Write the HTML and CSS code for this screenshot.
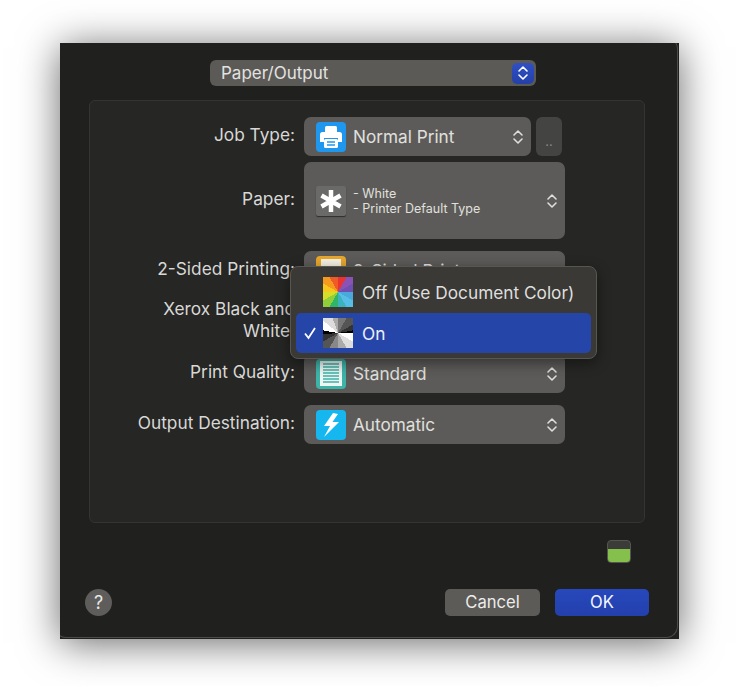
FILE: index.html
```html
<!DOCTYPE html>
<html lang="en">
<head>
<meta charset="utf-8">
<title>Print dialog</title>
<link rel="stylesheet" href="styles.css">
</head>
<body>
<main class="window">
  <div class="preset">
    <span>Paper/Output</span>
    <span class="preset-arrows"><svg width="14" height="18" viewBox="0 0 14 18"><path d="M3 7l4-4 4 4M3 11l4 4 4-4" class="chev chev-white"/></svg></span>
  </div>

  <section class="panel">
    <div class="row row-tight">
      <div class="label">Job Type:</div>
      <div class="control-group">
        <div class="select select-job">
          <svg class="icon" viewBox="0 0 30 30">
            <rect width="30" height="30" rx="4" fill="#1f97ee"/>
            <path d="M9 10V5.500A1.500 1.500 0 0 1 10.500 4h9A1.500 1.500 0 0 1 21 5.500V10z" fill="#fff"/>
            <path d="M6.500 10h17A2.500 2.500 0 0 1 26 12.500V20h-4v-4H8v4H4v-7.500A2.500 2.500 0 0 1 6.500 10z" fill="#fff"/>
            <rect x="8" y="17" width="14" height="9" rx="1.500" fill="#fff"/>
            <path d="M11 20h8M11 23h8" stroke="#1f97ee" stroke-width="1.500"/>
          </svg>
          <span class="select-text">Normal Print</span>
          <svg class="arrows" width="12" height="18" viewBox="0 0 12 18"><path d="M2 7l4-4 4 4M2 11l4 4 4-4" class="chev"/></svg>
        </div>
        <div class="dots">..</div>
      </div>
    </div>

    <div class="row row-paper">
      <div class="label">Paper:</div>
      <div class="select select-paper">
        <svg class="icon icon-paper" viewBox="0 0 30 30">
          <path d="M15 4v22M5.500 9.500l19 11M24.500 9.500l-19 11" stroke="#fff" stroke-width="4.500"/>
        </svg>
        <div class="paper-text">
          <div>- White</div>
          <div>- Printer Default Type</div>
        </div>
        <svg class="arrows" width="12" height="18" viewBox="0 0 12 18"><path d="M2 7l4-4 4 4M2 11l4 4 4-4" class="chev"/></svg>
      </div>
    </div>

    <div class="row">
      <div class="label">2-Sided Printing:</div>
      <div class="select">
        <svg class="icon icon-raised" viewBox="0 0 30 30">
          <rect width="30" height="30" rx="4" fill="#e8a72c"/>
          <rect x="5" y="3" width="20" height="24" fill="#f6f1e2"/>
        </svg>
        <span class="select-text">2-Sided Print</span>
      </div>
    </div>

    <div class="row row-xerox">
      <div class="label">Xerox Black and<br>White:</div>
      <div class="select"></div>
    </div>

    <div class="row">
      <div class="label">Print Quality:</div>
      <div class="select">
        <svg class="icon" viewBox="0 0 30 30">
          <rect width="30" height="30" rx="4" fill="#3eb3a8"/>
          <rect x="4" y="2" width="22" height="25" fill="#eef5f3"/>
          <path d="M7 5h16M7 8h16M7 11h16M7 14h16M7 17h16M7 20h16M7 23h16" stroke="#3eb3a8" stroke-width="1.300"/>
        </svg>
        <span class="select-text">Standard</span>
        <svg class="arrows" width="12" height="18" viewBox="0 0 12 18"><path d="M2 7l4-4 4 4M2 11l4 4 4-4" class="chev"/></svg>
      </div>
    </div>

    <div class="row">
      <div class="label">Output Destination:</div>
      <div class="select">
        <svg class="icon" viewBox="0 0 30 30">
          <rect width="30" height="30" rx="4" fill="#16b6ee"/>
          <path d="M17 3 L8 16 L14 16 L8 27 L23 12 L16.500 12 L22 4z" fill="#fff"/>
        </svg>
        <span class="select-text">Automatic</span>
        <svg class="arrows" width="12" height="18" viewBox="0 0 12 18"><path d="M2 7l4-4 4 4M2 11l4 4 4-4" class="chev"/></svg>
      </div>
    </div>
  </section>

  <div class="status-row">
    <div class="status"></div>
  </div>

  <footer class="footer">
    <div class="help">?</div>
    <div class="actions">
      <div class="btn btn-cancel">Cancel</div>
      <div class="btn btn-ok">OK</div>
    </div>
  </footer>

  <div class="menu">
    <div class="menu-item menu-item-first">
      <span class="check"></span>
      <span class="swatch swatch-color"></span>
      <span>Off (Use Document Color)</span>
    </div>
    <div class="menu-item menu-item-on">
      <span class="check"><svg width="14" height="14" viewBox="0 0 14 14"><path d="M2 7.500l3.500 4.500L12 2" class="tick"/></svg></span>
      <span class="swatch swatch-mono"></span>
      <span>On</span>
    </div>
  </div>
</main>
</body>
</html>
```

FILE: styles.css
```css
* {
  box-sizing: border-box;
}

html,
body {
  margin: 0;
  height: 100%;
  background: #fff;
  overflow: hidden;
}

body {
  padding: 43px 0 0 60px;
  font-family: Inter, "Liberation Sans", sans-serif;
  color: #dcdcda;
}

.window {
  position: relative;
  width: 619px;
  height: 596px;
  padding-top: 17px;
  background: #20201e;
  box-shadow: 0 4px 38px rgba(0, 0, 0, 0.6);
}

.window::after {
  content: "";
  position: absolute;
  inset: -6px 1px 1px -6px;
  border: 1px solid #4c4c4a;
  border-radius: 12px;
  pointer-events: none;
  clip-path: inset(6px 0 0 6px);
  border-left-color: transparent;
  border-top-color: transparent;
}

.preset {
  display: flex;
  align-items: center;
  justify-content: space-between;
  width: 326px;
  height: 26px;
  margin-left: 150px;
  padding: 0 2px 1px 11px;
  border-radius: 6px;
  background: #5b5a57;
  font-size: 17px;
  color: #e2e2e0;
}

.preset-arrows {
  display: flex;
  align-items: center;
  justify-content: center;
  width: 22px;
  height: 21px;
  margin-top: 1px;
  border-radius: 5px;
  background: linear-gradient(#2f50c4, #2440a8);
}

.chev {
  fill: none;
  stroke: #dedede;
  stroke-width: 1.600;
  stroke-linecap: round;
  stroke-linejoin: round;
}

.chev-white {
  stroke: #fff;
}

.panel {
  width: 556px;
  height: 423px;
  margin: 14px 0 0 29px;
  padding-top: 16px;
  border: 1px solid #343432;
  border-radius: 6px;
  background: #262624;
}

.row {
  display: flex;
  align-items: center;
  gap: 9px;
  height: 39px;
  margin-bottom: 12px;
}

.row-tight {
  margin-bottom: 6px;
}

.row-paper {
  height: 77px;
}

.row-xerox {
  height: 40px;
}

.label {
  width: 205px;
  padding-bottom: 4px;
  font-size: 17.300px;
  line-height: 22px;
  text-align: right;
  color: #d8d8d6;
}

.control-group {
  display: flex;
  gap: 5px;
}

.select {
  display: flex;
  align-items: center;
  width: 261px;
  height: 39px;
  padding: 0 7px 0 12px;
  border-radius: 7px;
  background: #5c5b59;
}

.select-job {
  width: 227px;
}

.select-paper {
  height: 77px;
}

.select-text {
  flex: 1;
  padding-left: 7px;
  font-size: 17.200px;
  color: #e0e0de;
  white-space: nowrap;
}

.icon {
  flex: none;
  width: 30px;
  height: 30px;
}

.icon-paper {
  border-radius: 2px;
  background: #6a6a68;
  box-shadow: 0 1px 1px rgba(0, 0, 0, 0.5);
}

.paper-text {
  flex: 1;
  padding-left: 7px;
  font-size: 12.500px;
  line-height: 15px;
  color: #e0e0de;
}

.arrows {
  flex: none;
}

.dots {
  display: flex;
  align-items: flex-end;
  justify-content: center;
  width: 26px;
  height: 39px;
  padding-bottom: 7px;
  border-radius: 6px;
  background: #444442;
  font-size: 13px;
  color: #888886;
}

.status-row {
  display: flex;
  justify-content: flex-end;
  margin-top: 17px;
  padding-right: 48px;
}

.status {
  width: 24px;
  height: 23px;
  border: 1px solid #55554f;
  border-radius: 4px;
  background: linear-gradient(#3b3b39 0 8px, #85c04d 8px);
}

.footer {
  display: flex;
  align-items: center;
  justify-content: space-between;
  margin-top: 26px;
  padding: 0 30px 0 25px;
}

.help {
  display: flex;
  align-items: center;
  justify-content: center;
  width: 27px;
  height: 27px;
  border-radius: 50%;
  background: #5e5d5b;
  font-size: 18px;
  color: #e8e8e6;
}

.actions {
  display: flex;
  gap: 15px;
}

.btn {
  display: flex;
  align-items: center;
  justify-content: center;
  width: 95px;
  height: 27px;
  padding-bottom: 2px;
  border-radius: 5px;
  font-size: 16.600px;
  color: #ececea;
}

.btn-cancel {
  background: #5c5b58;
}

.btn-ok {
  width: 94px;
  background: linear-gradient(#2748bc, #2340ac);
  color: #f4f6ff;
}

.menu {
  position: absolute;
  left: 230px;
  top: 223px;
  width: 307px;
  height: 93px;
  padding: 0 5px;
  border: 1px solid #575652;
  border-radius: 8px;
  background: #3a3936;
  box-shadow: 0 4px 14px rgba(0, 0, 0, 0.45);
  font-size: 17.250px;
  color: #dfdfdd;
}

.menu-item {
  display: flex;
  align-items: center;
  height: 40px;
  border-radius: 5px;
}

.menu-item-first {
  height: 46px;
  padding-top: 4px;
}

.menu-item-on {
  background: #2545a9;
  color: #eef1fb;
}

.check {
  display: flex;
  align-items: center;
  justify-content: center;
  flex: none;
  width: 27px;
}

.tick {
  fill: none;
  stroke: #fff;
  stroke-width: 1.800;
}

.swatch {
  width: 30px;
  height: 30px;
  margin-right: 9px;
}

.swatch-color {
  background: conic-gradient(#e8332f 0 30deg, #8a52b5 30deg 60deg, #6f4fb0 60deg 90deg, #4aa8dc 90deg 120deg, #56bde6 120deg 150deg, #3cb2c0 150deg 180deg, #2fb56a 180deg 210deg, #8fcf3a 210deg 240deg, #d8dc2a 240deg 270deg, #f6c81e 270deg 300deg, #f59a1e 300deg 330deg, #ee5a28 330deg);
}

.swatch-mono {
  background: conic-gradient(#777 0 30deg, #555 30deg 60deg, #333 60deg 80deg, #000 80deg 90deg, #fff 90deg 120deg, #ddd 120deg 150deg, #aaa 150deg 180deg, #888 180deg 210deg, #555 210deg 240deg, #333 240deg 265deg, #000 265deg 280deg, #fff 280deg 310deg, #ddd 310deg 340deg, #aaa 340deg);
}
```
